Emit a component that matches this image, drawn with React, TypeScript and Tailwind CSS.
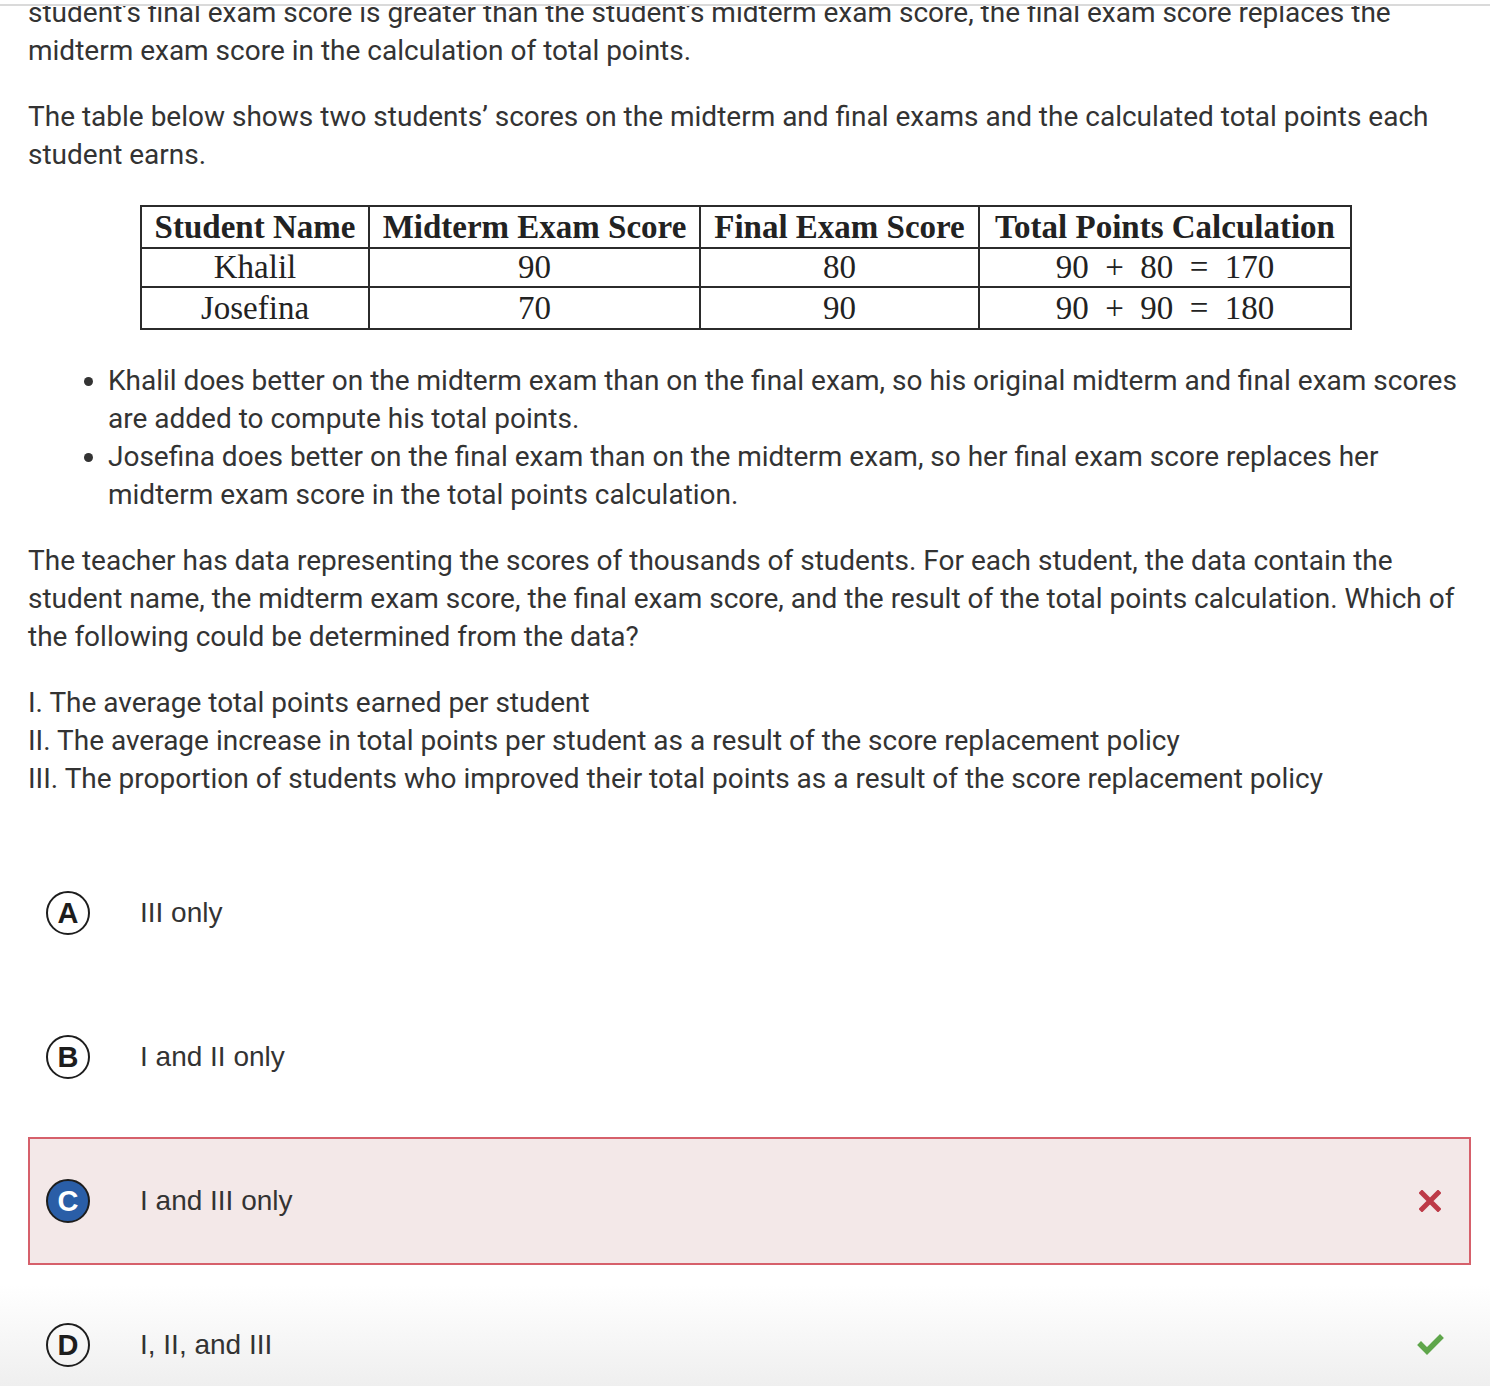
const options = [
  { letter: 'A', text: 'III only', state: 'none' },
  { letter: 'B', text: 'I and II only', state: 'none' },
  { letter: 'C', text: 'I and III only', state: 'wrong' },
  { letter: 'D', text: 'I, II, and III', state: 'right' },
]

const rows = [
  { name: 'Khalil', midterm: '90', final: '80', total: '90 + 80 = 170' },
  { name: 'Josefina', midterm: '70', final: '90', total: '90 + 90 = 180' },
]

function CrossIcon() {
  return (
    <svg width="22" height="22" viewBox="0 0 22 22">
      <path d="M3 3 L19 19 M19 3 L3 19" stroke="#bd3a47" strokeWidth="5" strokeLinecap="square" />
    </svg>
  )
}

function CheckIcon() {
  return (
    <svg width="28" height="22" viewBox="0 0 28 22" className="mr-[-4px]">
      <path d="M4 11 L10 17 L23 4" stroke="#5fa64b" strokeWidth="5.5" fill="none" strokeLinecap="square" />
    </svg>
  )
}

function Option({ letter, text, state }: { letter: string; text: string; state: string }) {
  const wrong = state === 'wrong'
  return (
    <div
      className={
        wrong
          ? 'flex h-[128px] items-center border-2 border-[#d6606b] bg-[#f3e8e8] pl-[16px] pr-[28px]'
          : 'flex h-[128px] items-center border-2 border-transparent pl-[16px] pr-[28px]'
      }
    >
      <div
        className={
          wrong
            ? 'flex h-[44px] w-[44px] items-center justify-center rounded-full border-2 border-[#1d1d1d] bg-[#2a5ea7] text-[29px] font-bold text-white'
            : 'flex h-[44px] w-[44px] items-center justify-center rounded-full border-2 border-[#1d1d1d] text-[29px] font-bold text-[#1d1d1d]'
        }
        style={{ fontFamily: '"Liberation Sans", Arial, sans-serif' }}
      >
        {letter}
      </div>
      <div
        className="ml-[50px] flex-1 text-[28px] text-[#333]"
        style={{ fontFamily: '"Liberation Sans", Arial, sans-serif' }}
      >
        {text}
      </div>
      {state === 'wrong' && <CrossIcon />}
      {state === 'right' && <CheckIcon />}
    </div>
  )
}

export default function App() {
  return (
    <div className="flex h-[1386px] w-[1490px] flex-col overflow-hidden bg-[linear-gradient(180deg,#ffffff_1285px,#efefef_1386px)]">
      <div className="h-[6px] shrink-0 border-b-2 border-[#dadada] bg-white" />
      <div className="flex-1 overflow-hidden">
        <div
          className="-mt-[12px] w-[1471px] pl-[28px] text-[28px] leading-[38px] text-[#333]"
          style={{ fontFamily: 'Roboto, "Noto Sans", sans-serif' }}
        >
          <p>
            student’s final exam score is greater than the student’s midterm exam score, the final exam score
            replaces the midterm exam score in the calculation of total points.
          </p>
          <p className="mt-[28px]">
            The table below shows two students’ scores on the midterm and final exams and the calculated total
            points each student earns.
          </p>

          <table
            className="ml-[112px] mt-[31px] border-collapse border-2 border-[#2b2b2b] text-[#222]"
            style={{ fontFamily: '"Liberation Serif", "Times New Roman", serif' }}
          >
            <thead>
              <tr className="h-[42px] text-[33px] font-bold leading-none">
                <th className="w-[228px] border-2 border-[#2b2b2b] px-[8px] font-bold">Student Name</th>
                <th className="w-[331px] border-2 border-[#2b2b2b] px-[8px] font-bold">Midterm Exam Score</th>
                <th className="w-[279px] border-2 border-[#2b2b2b] px-[8px] font-bold">Final Exam Score</th>
                <th className="w-[372px] border-2 border-[#2b2b2b] px-[8px] font-bold">Total Points Calculation</th>
              </tr>
            </thead>
            <tbody>
              {rows.map((r, i) => (
                <tr key={r.name} className={i === 0 ? 'h-[39px] text-[33px] leading-none' : 'h-[42px] text-[33px] leading-none'}>
                  <td className="border-2 border-[#2b2b2b] text-center">{r.name}</td>
                  <td className="border-2 border-[#2b2b2b] text-center">{r.midterm}</td>
                  <td className="border-2 border-[#2b2b2b] text-center">{r.final}</td>
                  <td className="border-2 border-[#2b2b2b] text-center whitespace-pre">{r.total.replace(/ /g, '  ')}</td>
                </tr>
              ))}
            </tbody>
          </table>

          <ul className="mt-[32px] list-disc pl-[80px] marker:text-[#333]">
            <li>
              Khalil does better on the midterm exam than on the final exam, so his original midterm and final exam
              scores are added to compute his total points.
            </li>
            <li>
              Josefina does better on the final exam than on the midterm exam, so her final exam score replaces her
              midterm exam score in the total points calculation.
            </li>
          </ul>

          <p className="mt-[28px]">
            The teacher has data representing the scores of thousands of students. For each student, the data contain
            the student name, the midterm exam score, the final exam score, and the result of the total points
            calculation. Which of the following could be determined from the data?
          </p>

          <div className="mt-[28px]">
            <div>I. The average total points earned per student</div>
            <div>II. The average increase in total points per student as a result of the score replacement policy</div>
            <div>III. The proportion of students who improved their total points as a result of the score replacement policy</div>
          </div>

          <div className="mt-[51px] flex flex-col gap-[16px]">
            {options.map((o) => (
              <Option key={o.letter} {...o} />
            ))}
          </div>
        </div>
      </div>
    </div>
  )
}
